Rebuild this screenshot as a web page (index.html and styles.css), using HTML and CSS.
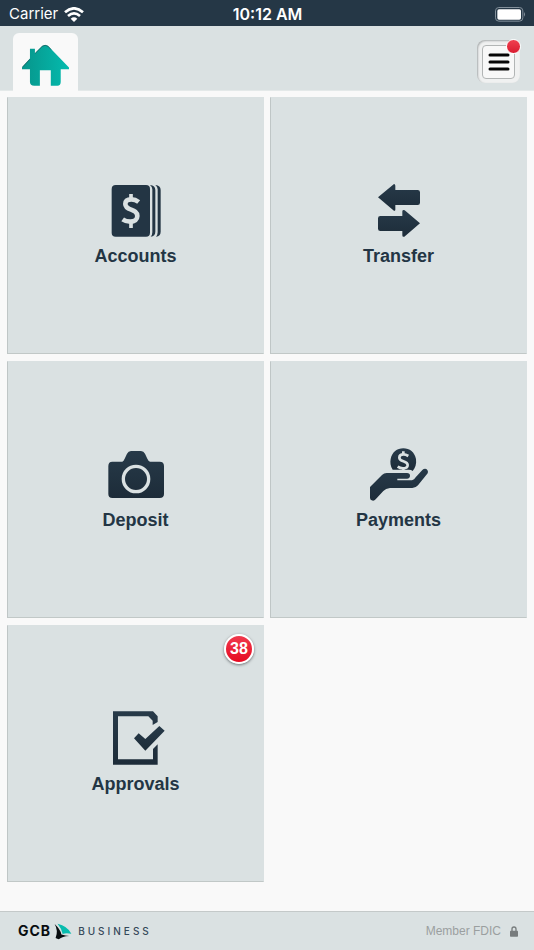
FILE: index.html
```html
<!DOCTYPE html>
<html lang="en">
<head>
<meta charset="utf-8">
<meta name="viewport" content="width=device-width, initial-scale=1">
<title>GCB Business</title>
<link rel="stylesheet" href="styles.css">
</head>
<body>
<svg class="defs" aria-hidden="true">
  <defs>
    <linearGradient id="navy" x1="0" y1="0" x2="0" y2="1"><stop offset="0" stop-color="#273a49"/><stop offset="1" stop-color="#1d2c39"/></linearGradient>
    <linearGradient id="teal" x1="0" y1="0" x2="1" y2="0"><stop offset="0" stop-color="#07958b"/><stop offset="1" stop-color="#04bbae"/></linearGradient>
  </defs>
</svg>
<div class="status">
  <div class="status-side">
    <span class="carrier">Carrier</span>
    <svg class="wifi" viewBox="0 0 60 45" aria-label="Wi-Fi">
      <g fill="none" stroke="#fff" stroke-width="8"><path d="M3 16Q30-8 57 16"/><path d="M12 27Q30 11 48 27"/></g>
      <path fill="#fff" d="M20 35Q30 27 40 35L30 45z"/>
    </svg>
  </div>
  <div class="clock">10:12 AM</div>
  <div class="status-side status-end">
    <svg class="battery" viewBox="0 0 93 45" aria-label="Battery">
      <rect x="1.500" y="1.500" width="82" height="41" rx="10" fill="none" stroke="#83909b" stroke-width="3"/>
      <rect x="7" y="7" width="71" height="31" rx="5" fill="#fff"/>
      <path d="M87 15q6 7 0 14z" fill="#83909b"/>
    </svg>
  </div>
</div>
<header class="header">
  <a class="home" href="#" aria-label="Home">
    <svg class="home-icon" viewBox="64 130 146 130">
      <path fill="url(#teal)" d="M66 200L90 174V144H105V158L127 136Q136 130 145 136L208 201V206H183V245Q183 256 173 256H153V209H120V256H103Q90 256 90 245V206H66z"/>
      <path fill="none" stroke="#1b4c4f" stroke-width="2" d="M68 199L90 176M106 158L127 137Q136 131 145 137L154 147"/>
    </svg>
  </a>
  <button class="menu" type="button" aria-label="Menu">
    <span class="menu-face">
      <svg class="bars" viewBox="0 0 22 18"><path d="M2 2H20M2 9H20M2 16H20" stroke="#050505" stroke-width="3" stroke-linecap="round"/></svg>
    </span>
    <span class="dot"></span>
  </button>
</header>
<main class="grid">
  <a class="tile" href="#">
    <svg class="icon" viewBox="60 36 180 180">
      <rect x="77" y="45" width="115" height="155" rx="12" fill="#233544"/>
      <path fill="#233544" d="M192 45Q208 47 208 60V185Q208 198 194 200Q199 195 199 187V58Q199 50 192 45zM208 45Q224 47 224 60V185Q224 198 210 200Q215 195 215 187V58Q215 50 208 45z"/>
      <path fill="none" stroke="#dae1e2" stroke-width="14" d="M158 96Q148 88 136 88C123 88 118 94 118 102C118 124 154 114 154 138C154 149 146 155 133 155Q120 155 110 148"/>
      <path stroke="#dae1e2" stroke-width="11" d="M135 72V89M135 155V174"/>
    </svg>
    <span class="label">Accounts</span>
  </a>
  <a class="tile" href="#">
    <svg class="icon" viewBox="57 36 180 180">
      <path fill="url(#navy)" d="M84 82L132 42Q136 42 136 47V60H203Q210 60 210 67V98Q210 105 203 105H136V119Q135 125 130 121z"/>
      <path fill="url(#navy)" d="M210 160L163 200Q157 202 157 196V183H91Q84 183 84 176V145Q84 138 91 138H157V124Q158 118 164 121z"/>
    </svg>
    <span class="label">Transfer</span>
  </a>
  <a class="tile" href="#">
    <svg class="icon" viewBox="60 36 180 180">
      <path fill="url(#navy)" d="M79 83H109Q113 81 116 74L123 59Q127 51 135 51H165Q173 51 177 59L184 74Q187 81 192 83H221Q234 83 234 96V180Q234 192 221 192H79Q67 192 67 180V96Q67 83 79 83z"/>
      <circle cx="150" cy="135" r="38" fill="none" stroke="#dae1e2" stroke-width="10"/>
    </svg>
    <span class="label">Deposit</span>
  </a>
  <a class="tile" href="#">
    <svg class="icon" viewBox="57 36 180 180">
      <path fill="url(#navy)" d="M128 107C121 97 120 84 122 75C126 55 141 43 160 43C179 43 194 55 198 75C200 90 196 102 188 111Q184 107 176 107z"/>
      <path fill="none" stroke="#dae1e2" stroke-width="8" d="M175 66Q167 61 160 61C151 61 148 65 148 71C148 85 173 78 173 93C173 100 167 103 159 103Q150 103 143 98M160 52V62M160 102V110"/>
      <path fill="url(#navy)" d="M60 159L96 123Q102 117 110 117H171Q180 117 180 125Q180 133 171 134H142V139H186Q193 137 197 130L217 108Q222 103 229 105Q236 110 233 118L204 154Q197 162 187 162H120Q107 163 100 171L77 196Q72 202 65 199Q60 197 60 191z"/>
    </svg>
    <span class="label">Payments</span>
  </a>
  <a class="tile" href="#">
    <svg class="icon" viewBox="60 36 180 180">
      <path fill="url(#navy)" d="M81 40H201L215 55V72L200 81V68L187 55H96V184H201V153L215 139V200H81z"/>
      <path fill="url(#navy)" d="M144 121L158 106L178 123L220 84L236 98L178 158z"/>
    </svg>
    <span class="label">Approvals</span>
    <span class="badge">38</span>
  </a>
</main>
<footer class="footer">
  <div class="brand">
    <span class="gcb">GCB</span>
    <svg class="sail" viewBox="160 156 56 50">
      <path fill="#080d10" d="M162 158Q180 175 183 190Q196 194 207 195Q186 196 175 205Q170 204 165 201Q174 179 162 158z"/>
      <path fill="#08bcae" d="M171 157Q202 164 214 188Q197 184 187 189Q183 171 171 157z"/>
    </svg>
    <span class="business">BUSINESS</span>
  </div>
  <div class="fdic">
    <span>Member FDIC</span>
    <svg class="lock" viewBox="0 0 24 33" aria-hidden="true"><path d="M6 15V9Q6 3 12 3T18 9V15" fill="none" stroke="#777c7d" stroke-width="4"/><rect y="14" width="24" height="18" rx="2" fill="#777c7d"/></svg>
  </div>
</footer>
</body>
</html>
```
FILE: styles.css
```css
* { box-sizing: border-box; }
body {
  margin: 0;
  min-height: 100vh;
  display: flex;
  flex-direction: column;
  background: #f9f9f9;
  color: #233544;
  font-family: "Liberation Sans", Arial, sans-serif;
}
svg { display: block; }
.defs { position: absolute; width: 0; height: 0; }

.status {
  display: flex;
  align-items: center;
  height: 26px;
  padding: 2px 8px 0 9px;
  background: #253746;
  color: #fff;
  font: 16px/24px Inter, sans-serif;
}
.status-side { flex: 1; display: flex; align-items: center; gap: 6px; }
.status-end { justify-content: flex-end; }
.carrier { font-size: 15px; }
.clock { font-weight: 600; }
.wifi { width: 20px; height: 15px; }
.battery { width: 31px; height: 15px; }

.header {
  display: flex;
  justify-content: space-between;
  align-items: flex-start;
  height: 65px;
  padding: 7px 14px 0 13px;
  background: #dae1e2;
  border-bottom: 1px solid #e4e9e9;
}
.home {
  display: flex;
  justify-content: center;
  width: 65px;
  height: 58px;
  padding-top: 11px;
  border-radius: 6px 6px 0 0;
  background: #f9f9f9;
}
.home-icon { width: 49px; height: 43px; }
.menu {
  position: relative;
  width: 43px;
  height: 43px;
  margin-top: 7px;
  padding: 5px;
  border: 0;
  border-radius: 8px;
  background: #f0f1f1;
  box-shadow: inset 1px 1px 2px #a9adae;
}
.menu-face {
  display: flex;
  align-items: center;
  justify-content: center;
  height: 34px;
  border: 1px solid #b2b5b5;
  border-radius: 4px;
  background: #f8f8f8;
}
.bars { width: 22px; height: 18px; }
.dot {
  position: absolute;
  top: -1px;
  right: -1px;
  width: 15px;
  height: 15px;
  border: 1px solid #fff;
  border-radius: 50%;
  background: linear-gradient(#f04050, #d91c30);
}

.grid {
  flex: 1;
  display: grid;
  grid-template-columns: 1fr 1fr;
  align-content: start;
  gap: 7px 6px;
  padding: 6px 7px 28px;
}
.tile {
  position: relative;
  display: flex;
  flex-direction: column;
  align-items: center;
  justify-content: center;
  gap: 2px;
  aspect-ratio: 1;
  padding-bottom: 2px;
  border: 1px solid #dae1e2;
  border-left-color: #bfc6c6;
  border-bottom-color: #c1c8c7;
  background: #dae1e2;
  color: inherit;
  text-decoration: none;
}
.icon { width: 60px; height: 60px; }
.label { font-size: 18px; line-height: 24px; font-weight: 700; }
.badge {
  position: absolute;
  top: 8px;
  right: 9px;
  width: 30px;
  height: 30px;
  border: 2px solid #fff;
  border-radius: 50%;
  background: linear-gradient(#f0394d, #e60b22);
  box-shadow: 0 1px 3px #6a7073;
  color: #fff;
  font: 700 16px/26px "Liberation Sans", Arial, sans-serif;
  text-align: center;
}

.footer {
  display: flex;
  align-items: center;
  justify-content: space-between;
  height: 39px;
  padding: 0 16px 0 18px;
  border-top: 1px solid #c4c9c9;
  background: #dae1e2;
}
.brand { display: flex; align-items: center; gap: 3px; }
.gcb { color: #080d10; font: 700 14px/16px Inter, sans-serif; letter-spacing: 1px; }
.sail { width: 18px; height: 17px; }
.business { margin-left: 3px; color: #35485a; font: 500 10px/16px Inter, sans-serif; letter-spacing: 3px; }
.fdic { display: flex; align-items: center; gap: 9px; color: #9a9fa0; font-size: 12px; line-height: 16px; }
.lock { width: 8px; height: 11px; }
```
